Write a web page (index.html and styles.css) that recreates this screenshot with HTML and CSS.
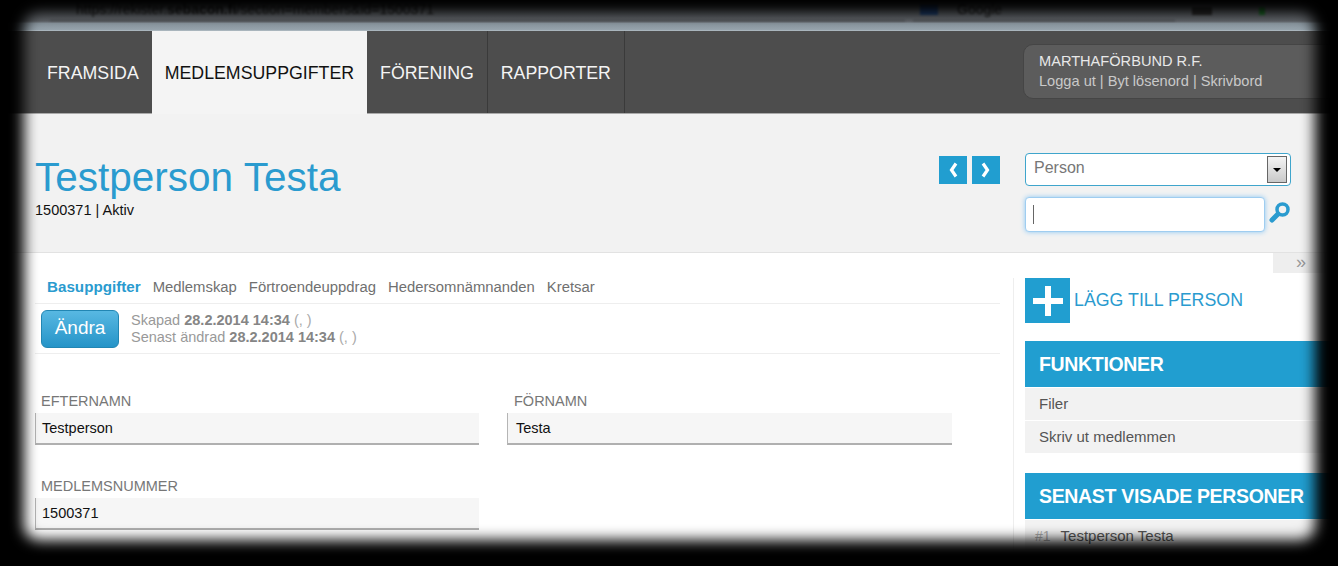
FILE: index.html
```html
<!DOCTYPE html>
<html lang="en">
<head>
    <meta charset="UTF-8">
    <meta name="viewport" content="width=device-width, initial-scale=1.0">
    <title>Testperson Testa</title>
    <link rel="stylesheet" href="styles.css">
</head>
<body>
    <div class="page">
        <div class="browser-bar">
            <span class="url-box">https://rekister.<b>sebacon.fi</b>/section=members&amp;id=1500371</span>
            <span class="search-box"><i class="search-logo"></i>Google</span>
            <i class="bar-icon dark"></i>
            <i class="bar-icon green"></i>
        </div>

        <nav class="top-nav">
            <a class="tab first" href="#">FRAMSIDA</a>
            <a class="tab active" href="#">MEDLEMSUPPGIFTER</a>
            <a class="tab" href="#">FÖRENING</a>
            <a class="tab" href="#">RAPPORTER</a>
            <div class="user-box">
                <div class="user-name">MARTHAFÖRBUND R.F.</div>
                <div class="user-links">Logga ut | Byt lösenord | Skrivbord</div>
            </div>
        </nav>

        <header class="person-header">
            <div class="person-title">
                <h1>Testperson Testa</h1>
                <div class="person-id">1500371 | Aktiv</div>
            </div>
            <div class="pager">
                <a class="pager-btn" href="#">
                    <svg width="10" height="16" viewBox="0 0 10 16"><path d="M8 1.5 3.5 8 8 14.5" fill="none" stroke="#fff" stroke-width="3.2"/></svg>
                </a>
                <a class="pager-btn" href="#">
                    <svg width="10" height="16" viewBox="0 0 10 16"><path d="M2 1.5 6.5 8 2 14.5" fill="none" stroke="#fff" stroke-width="3.2"/></svg>
                </a>
            </div>
            <div class="finder">
                <div class="select-box">
                    <span class="select-text">Person</span>
                    <span class="select-arrow"><i></i></span>
                </div>
                <div class="finder-row">
                    <div class="search-input"><i class="caret"></i></div>
                    <svg class="magnifier" width="22" height="22" viewBox="0 0 22 22">
                        <circle cx="13.5" cy="8.5" r="5.5" fill="none" stroke="#2a9bcf" stroke-width="3.5"/>
                        <path d="M9 13 3 19" stroke="#2a9bcf" stroke-width="5" stroke-linecap="round"/>
                    </svg>
                </div>
            </div>
        </header>

        <div class="content">
            <main class="main-col">
                <div class="sub-tabs">
                    <a class="current" href="#">Basuppgifter</a>
                    <a href="#">Medlemskap</a>
                    <a href="#">Förtroendeuppdrag</a>
                    <a href="#">Hedersomnämnanden</a>
                    <a href="#">Kretsar</a>
                </div>
                <div class="action-row">
                    <button class="edit-btn" type="button">Ändra</button>
                    <div class="meta">
                        <div>Skapad <b>28.2.2014 14:34</b> <span class="faint">(, )</span></div>
                        <div>Senast ändrad <b>28.2.2014 14:34</b> <span class="faint">(, )</span></div>
                    </div>
                </div>
                <div class="form-grid">
                    <div class="field">
                        <label>EFTERNAMN</label>
                        <div class="value">Testperson</div>
                    </div>
                    <div class="field right">
                        <label>FÖRNAMN</label>
                        <div class="value">Testa</div>
                    </div>
                    <div class="field">
                        <label>MEDLEMSNUMMER</label>
                        <div class="value">1500371</div>
                    </div>
                </div>
            </main>

            <aside class="side-col">
                <div class="collapse-tab">»</div>
                <a class="add-person" href="#">
                    <span class="add-icon">
                        <svg width="32" height="32" viewBox="0 0 32 32"><path d="M16 1v30M1 16h30" stroke="#fff" stroke-width="6"/></svg>
                    </span>
                    LÄGG TILL PERSON
                </a>
                <h2 class="side-head">FUNKTIONER</h2>
                <a class="side-item" href="#">Filer</a>
                <a class="side-item" href="#">Skriv ut medlemmen</a>
                <h2 class="side-head second">SENAST VISADE PERSONER</h2>
                <a class="side-item" href="#"><span class="rank">#1</span>Testperson Testa</a>
            </aside>
        </div>

        <div class="vignette"></div>
    </div>
</body>
</html>
```

FILE: styles.css
```css
html, body {
    margin: 0;
    padding: 0;
    height: 100%;
    overflow: hidden;
    background-color: #000;
}
body {
    font-family: "Liberation Sans", Arial, sans-serif;
    font-size: 14.5px;
    color: #111;
}
a {
    text-decoration: none;
    color: inherit;
}
.page {
    position: relative;
    width: 1338px;
    height: 566px;
    overflow: hidden;
    background-color: #fff;
}
/* black soft frame, box is bigger than the window so its corners stay hidden */
.vignette {
    position: absolute;
    top: -52px;
    left: -41px;
    right: -42px;
    bottom: -39px;
    border-radius: 80px;
    box-shadow: inset 0 0 14px 65px #000;
    pointer-events: none;
}

/* browser chrome */
.browser-bar {
    height: 31px;
    box-sizing: border-box;
    display: flex;
    align-items: flex-start;
    padding-left: 50px;
    background: linear-gradient(#55595d 0, #63676c 68%, #8b97a0 76%, #96a3ac 96%, #b6c1c8 100%);
}
.url-box {
    width: 855px;
    height: 21px;
    box-sizing: border-box;
    padding-left: 26px;
    border-bottom: 1px solid #45484c;
    color: #1a1a1a;
    font-size: 14px;
    line-height: 18px;
    filter: blur(1px);
}
.search-box {
    width: 262px;
    height: 21px;
    box-sizing: border-box;
    margin-left: 8px;
    padding-left: 7px;
    display: flex;
    gap: 19px;
    border-bottom: 1px solid #45484c;
    color: #1a1a1a;
    font-size: 14px;
    line-height: 18px;
    filter: blur(1px);
}
.search-logo {
    width: 18px;
    height: 11px;
    margin-top: 4px;
    background-color: #1e3d6b;
}
.bar-icon {
    height: 8px;
    margin-top: 7px;
    filter: blur(1px);
}
.bar-icon.dark {
    width: 20px;
    margin-left: 17px;
    background-color: #2b2b2b;
}
.bar-icon.green {
    width: 6px;
    margin-left: 47px;
    background-color: #1f6b2a;
}

/* top nav */
.top-nav {
    height: 82px;
    display: flex;
    background-color: #4d4d4d;
    border-bottom: 1px solid #aaa;
}
.tab {
    display: flex;
    align-items: center;
    padding: 2px 13px 0;
    color: #f4f4f4;
    font-size: 17.75px;
    border-right: 1px solid #3a3a3a;
}
.tab.first {
    padding-left: 47px;
    border-right: 0;
}
.tab.active {
    background-color: #f4f4f4;
    color: #111;
    border-right: 0;
    margin-bottom: -1px;
}
.user-box {
    margin: 13px 0 0 auto;
    width: 315px;
    height: 55px;
    box-sizing: border-box;
    padding: 6px 15px;
    background-color: #5c5c5c;
    border: 1px solid #454545;
    border-radius: 10px 0 0 10px;
    font-size: 14.6px;
    line-height: 20px;
    color: #e8e8e8;
}
.user-links {
    color: #c9c9c9;
}

/* person header */
.person-header {
    height: 139px;
    box-sizing: border-box;
    display: flex;
    background-color: #f2f2f2;
    border-bottom: 1px solid #e2e2e2;
    padding: 39px 47px 0 35px;
}
.person-title {
    flex-grow: 1;
}
.person-title h1 {
    margin: 0;
    font-size: 40.5px;
    font-weight: normal;
    line-height: 48px;
    color: #2a9bcf;
}
.person-id {
    margin-top: 1px;
    color: #111;
}
.pager {
    display: flex;
    gap: 5px;
    margin-top: 3px;
    margin-right: 25px;
    height: 28px;
}
.pager-btn {
    width: 28px;
    height: 28px;
    display: flex;
    align-items: center;
    justify-content: center;
    background-color: #219ed0;
}
.finder {
    width: 266px;
}
.select-box {
    height: 33px;
    box-sizing: border-box;
    display: flex;
    align-items: center;
    justify-content: space-between;
    padding: 0 3px 0 8px;
    background-color: #fff;
    border: 1px solid #3fa5cc;
    border-radius: 4px;
    font-size: 16px;
    color: #777;
}
.select-text {
    margin-bottom: 3px;
}
.select-arrow {
    width: 20px;
    height: 27px;
    box-sizing: border-box;
    display: flex;
    align-items: center;
    justify-content: center;
    background: linear-gradient(#f4f4f4, #c9c9c9);
    border: 1px solid #666;
}
.select-arrow i {
    width: 0;
    height: 0;
    border-left: 4px solid transparent;
    border-right: 4px solid transparent;
    border-top: 4px solid #000;
}
.finder-row {
    display: flex;
    align-items: center;
    gap: 4px;
    margin-top: 11px;
}
.search-input {
    width: 240px;
    height: 35px;
    box-sizing: border-box;
    display: flex;
    align-items: center;
    padding-left: 7px;
    background-color: #fff;
    border: 1px solid #9fcdf0;
    border-radius: 4px;
    box-shadow: 0 0 5px #8cc8f5;
}
.caret {
    width: 1px;
    height: 19px;
    background-color: #666;
}
.magnifier {
    margin-bottom: 5px;
}

/* main content */
.content {
    display: flex;
    padding-left: 35px;
    height: 314px;
}
.main-col {
    width: 965px;
}
.sub-tabs {
    height: 51px;
    box-sizing: border-box;
    display: flex;
    align-items: baseline;
    gap: 12px;
    padding: 25px 0 0 12px;
    border-bottom: 1px solid #eee;
    color: #707070;
    font-size: 14.85px;
}
.sub-tabs .current {
    color: #2a9bcf;
    font-size: 15.2px;
    font-weight: bold;
}
.action-row {
    height: 50px;
    box-sizing: border-box;
    display: flex;
    align-items: center;
    gap: 12px;
    padding-left: 6px;
    border-bottom: 1px solid #eee;
    color: #999;
    line-height: 17px;
}
.edit-btn {
    width: 78px;
    height: 38px;
    padding: 0 0 2px;
    border: 1px solid #2286b3;
    border-radius: 6px;
    background: linear-gradient(#58b8e2, #2594c8);
    color: #fff;
    font-family: inherit;
    font-size: 19px;
}
.meta b {
    color: #858585;
}
.faint {
    color: #aaa;
}
.form-grid {
    display: grid;
    grid-template-columns: 444px 445px;
    column-gap: 28px;
    row-gap: 32px;
    padding-top: 38px;
}
.field label {
    display: block;
    margin-bottom: 2px;
    padding-left: 6px;
    line-height: 19px;
    color: #777;
}
.value {
    height: 32px;
    box-sizing: border-box;
    padding: 6px 0 0 6px;
    background-color: #f6f6f6;
    border-left: 1px solid #b5b5b5;
    border-bottom: 2px solid #b0b0b0;
    line-height: 19px;
    color: #111;
}
.field.right label {
    padding-left: 7px;
}
.field.right .value {
    padding-left: 8px;
}

/* sidebar */
.side-col {
    position: relative;
    flex-grow: 1;
    margin: 25px 0 0 13px;
    padding-left: 11px;
    border-left: 1px solid #eee;
}
.collapse-tab {
    position: absolute;
    top: -25px;
    left: 259px;
    width: 60px;
    height: 20px;
    box-sizing: border-box;
    padding-left: 23px;
    background-color: #eee;
    color: #999;
    font-size: 18px;
    line-height: 19px;
}
.add-person {
    display: flex;
    align-items: center;
    gap: 4px;
    font-size: 17.8px;
    color: #2a9bcf;
}
.add-icon {
    width: 45px;
    height: 45px;
    display: flex;
    align-items: center;
    justify-content: center;
    background-color: #219ed0;
}
.side-head {
    margin: 18px 0 1px;
    height: 46px;
    padding-left: 14px;
    background-color: #219ed0;
    color: #fff;
    font-size: 19.5px;
    letter-spacing: -0.33px;
    line-height: 46px;
}
.side-head.second {
    margin-top: 20px;
}
.side-item {
    display: block;
    height: 32px;
    margin-bottom: 1px;
    padding-left: 14px;
    background-color: #f2f2f2;
    color: #555;
    font-size: 15px;
    line-height: 32px;
}
.rank {
    margin: 0 10px 0 -4px;
    color: #aaa;
    font-size: 14px;
}
```
